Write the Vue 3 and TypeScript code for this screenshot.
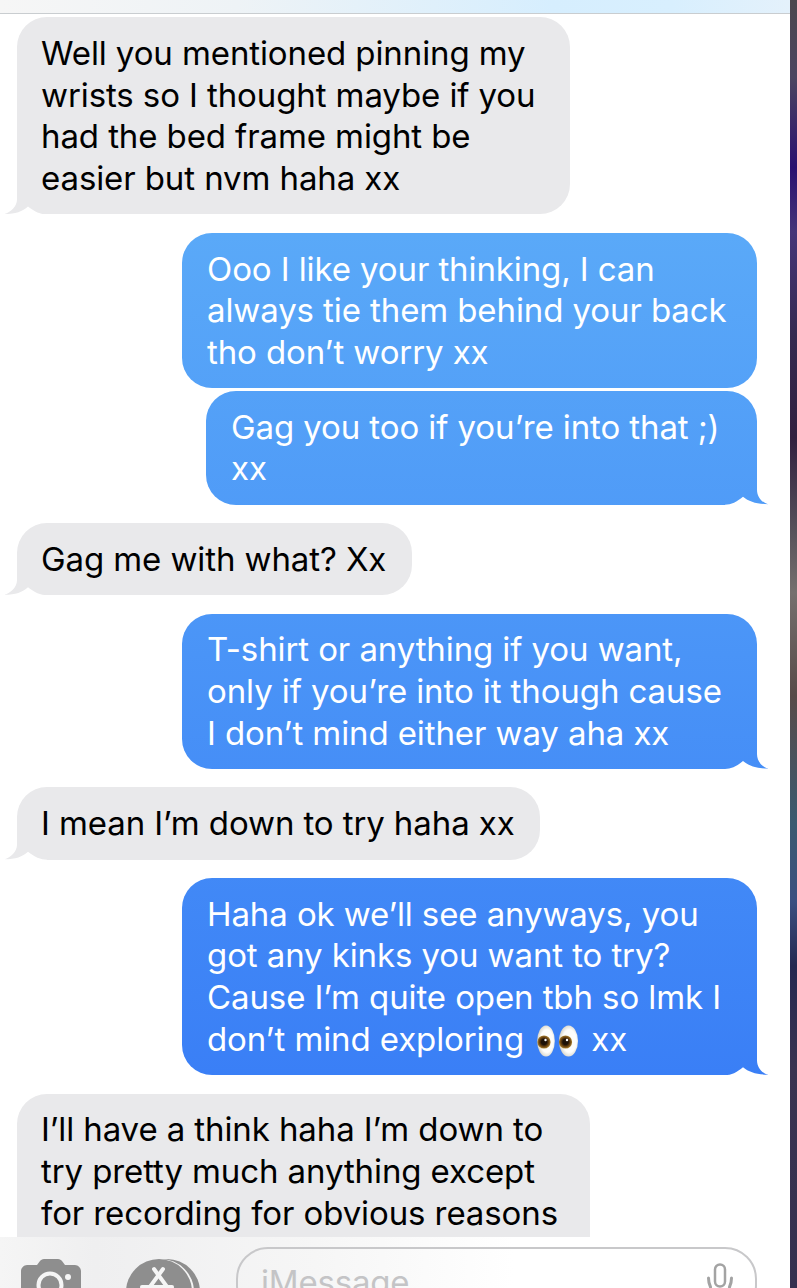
<script setup lang="ts">
interface Message {
  from: 'me' | 'them'
  width: number
  lines: string[]
  tail: boolean
  tight?: boolean
  eyes?: boolean
  cut?: boolean
}

const messages: Message[] = [
  { from: 'them', width: 553, tail: true, lines: ['Well you mentioned pinning my', 'wrists so I thought maybe if you', 'had the bed frame might be', 'easier but nvm haha xx'] },
  { from: 'me', width: 575, tail: false, lines: ['Ooo I like your thinking, I can', 'always tie them behind your back', 'tho don’t worry xx'] },
  { from: 'me', width: 551, tail: true, tight: true, lines: ['Gag you too if you’re into that ;)', 'xx'] },
  { from: 'them', width: 395, tail: true, lines: ['Gag me with what? Xx'] },
  { from: 'me', width: 575, tail: true, lines: ['T-shirt or anything if you want,', 'only if you’re into it though cause', 'I don’t mind either way aha xx'] },
  { from: 'them', width: 523, tail: true, lines: ['I mean I’m down to try haha xx'] },
  { from: 'me', width: 575, tail: true, eyes: true, lines: ['Haha ok we’ll see anyways, you', 'got any kinks you want to try?', 'Cause I’m quite open tbh so lmk I', 'don’t mind exploring'] },
  { from: 'them', width: 573, tail: false, cut: true, lines: ['I’ll have a think haha I’m down to', 'try pretty much anything except', 'for recording for obvious reasons'] },
]
</script>

<template>
  <div class="page">
    <div class="screen">
      <div class="top-bar"></div>
      <div class="thread">
        <div
          v-for="(m, i) in messages"
          :key="i"
          class="bubble"
          :class="[m.from, { tail: m.tail, tight: m.tight, cut: m.cut }]"
          :style="{ width: m.width + 'px' }"
        >
          <div v-for="(line, j) in m.lines" :key="j" class="line">
            {{ line }}
            <template v-if="m.eyes && j === m.lines.length - 1">
              <svg class="eyes" viewBox="0 0 42 32" role="img" aria-label="eyes">
                <defs>
                  <radialGradient id="eyeWhite" cx="0.55" cy="0.5" r="0.6">
                    <stop offset="0.6" stop-color="#fdfdfb" />
                    <stop offset="1" stop-color="#c9c6b8" />
                  </radialGradient>
                  <radialGradient id="iris" cx="0.5" cy="0.5" r="0.5">
                    <stop offset="0.4" stop-color="#1d1208" />
                    <stop offset="0.72" stop-color="#6b4310" />
                    <stop offset="1" stop-color="#a98231" />
                  </radialGradient>
                </defs>
                <ellipse cx="9" cy="16" rx="8.8" ry="15.6" fill="url(#eyeWhite)" />
                <ellipse cx="31.5" cy="16" rx="9.5" ry="15.6" fill="url(#eyeWhite)" />
                <circle cx="7" cy="17" r="6.6" fill="url(#iris)" />
                <circle cx="28.5" cy="17" r="6.6" fill="url(#iris)" />
                <circle cx="8.5" cy="15" r="1.2" fill="#fff" />
                <circle cx="30" cy="15" r="1.2" fill="#fff" />
              </svg>
              <span class="after-eyes">xx</span>
            </template>
          </div>
        </div>
      </div>

      <div class="composer">
        <svg class="camera" viewBox="0 0 62 46">
          <path d="M7 6h10l3-4c1-1 2-2 4-2h14c2 0 3 1 4 2l3 4h10c3 0 6 3 6 6v34H1V12c0-3 3-6 6-6z" fill="#8e8e8e" />
          <circle cx="30" cy="26" r="11.5" fill="none" stroke="#f5f5f5" stroke-width="4" />
          <circle cx="48" cy="18" r="3" fill="#f5f5f5" />
        </svg>
        <svg class="apps" viewBox="0 0 75 60">
          <circle cx="41" cy="33" r="33" fill="#8e8e8e" />
          <circle cx="35" cy="33" r="33" fill="#f5f5f5" />
          <circle cx="33" cy="33" r="33" fill="#8e8e8e" />
          <g stroke="#f5f5f5" stroke-width="4" stroke-linecap="round" fill="none">
            <path d="M28 10L50 40" />
            <path d="M37 10L15 40" />
            <path d="M16 28H46" />
          </g>
        </svg>
        <div class="input">
          <span class="placeholder">iMessage</span>
          <svg class="mic" viewBox="0 0 28 26">
            <rect x="9" y="1.5" width="10" height="22" rx="5" fill="none" stroke="#a3a3a3" stroke-width="2.5" />
            <path d="M2.5 15c0 3 .5 6 2 9M25.5 15c0 3-.5 6-2 9" stroke="#a3a3a3" stroke-width="3" stroke-linecap="round" fill="none" />
          </svg>
        </div>
      </div>
    </div>
    <div class="strip"></div>
  </div>
</template>

<style scoped>
.page {
  display: flex;
  width: 797px;
  height: 1288px;
  overflow: hidden;
  background: #fff;
  font-family: Inter, "Liberation Sans", sans-serif;
}
.screen {
  position: relative;
  width: 790px;
  height: 1288px;
  overflow: hidden;
}
.strip {
  width: 7px;
  background: linear-gradient(
    #4c484e 0%,
    #4c4560 6%,
    #2a1070 13%,
    #453578 18%,
    #352a50 26%,
    #32203f 34%,
    #55505a 41%,
    #75706e 46%,
    #584a48 54%,
    #3a5a70 64%,
    #3a4f80 70%,
    #252850 75%,
    #3a3350 83%,
    #35304f 100%
  );
}
.top-bar {
  height: 13px;
  border-bottom: 1px solid #c9cdd0;
  background: linear-gradient(90deg, #f6f6f6 0%, #eef3f6 30%, #d6eefe 70%, #d8effe 85%, #e4f1fb 100%);
}
.thread {
  display: flex;
  flex-direction: column;
  gap: 18.4px;
  padding-top: 3.2px;
}
.bubble {
  position: relative;
  box-sizing: border-box;
  padding: 15.75px 25px 14.75px;
  border-radius: 30px;
  font-size: 33px;
  line-height: 41.67px;
  letter-spacing: -0.1px;
  white-space: nowrap;
}
.them {
  align-self: flex-start;
  margin-left: 17px;
  padding-left: 24px;
  background: #e9e9eb;
  color: #000;
}
.me {
  align-self: flex-end;
  margin-right: 33px;
  color: #fff;
  background: linear-gradient(#5aa9f8 233px, #3a7ff6 1075px) fixed;
}
.tight {
  margin-top: -15.9px;
}
.cut {
  padding-bottom: 40px;
}
.me.tail {
  border-bottom-right-radius: 0;
}
.them.tail {
  border-bottom-left-radius: 0;
}

/* tail: outer curve past the bubble edge */
.tail::before,
.tail::after {
  content: "";
  position: absolute;
  bottom: -1px;
  width: 50px;
  height: 31px;
}
.me.tail::before {
  right: -11px;
  background: linear-gradient(#5aa9f8 233px, #3a7ff6 1075px) fixed;
  clip-path: path("M39 0V15C39 22 44 28 50 29.5V30H39Z");
}
.me.tail::after {
  right: -11px;
  background: #fff;
  clip-path: path("M7 30C13 30 19 27 25 22C31 27 39 29.5 50 29.5V31H7Z");
}
.them.tail::before {
  left: -12.5px;
  background: #e9e9eb;
  clip-path: path("M12.5 0V15C12.5 22 6 28 0 29.5V30H12.5Z");
}
.them.tail::after {
  left: -12.5px;
  background: #fff;
  clip-path: path("M42.5 30C36.5 30 29.5 27 23.5 22C18 27 11 29.5 0 29.5V31H42.5Z");
}

.eyes {
  display: inline-block;
  width: 42px;
  height: 32px;
  margin-left: 4px;
  vertical-align: -6px;
}
.after-eyes {
  margin-left: 12px;
}

/* message entry bar sits over the thread */
.composer {
  position: absolute;
  left: 0;
  right: 0;
  bottom: 0;
  display: flex;
  align-items: flex-start;
  height: 51px;
  padding: 0 33px 0 20px;
  box-sizing: border-box;
  background: linear-gradient(90deg, #f5f5f5 0%, #efeff0 12%, #f6f6f6 40%, #fff 65%);
}
.camera {
  flex: none;
  width: 62px;
  height: 46px;
  margin-top: 22px;
}
.apps {
  flex: none;
  width: 75px;
  height: 60px;
  margin-top: 22px;
  margin-left: 44px;
}
.input {
  position: relative;
  flex: 1;
  height: 70px;
  margin-top: 10px;
  margin-left: 35px;
  box-sizing: border-box;
  border: 2px solid #c8c8ca;
  border-radius: 32px;
  padding: 15px 0 0 23px;
}
.placeholder {
  font-size: 33px;
  line-height: 36px;
  color: #c4c4c6;
  letter-spacing: -0.2px;
}
.mic {
  position: absolute;
  top: 14px;
  right: 21px;
  width: 28px;
  height: 26px;
}
</style>

<style>
html, body { background: #fff; }
</style>
